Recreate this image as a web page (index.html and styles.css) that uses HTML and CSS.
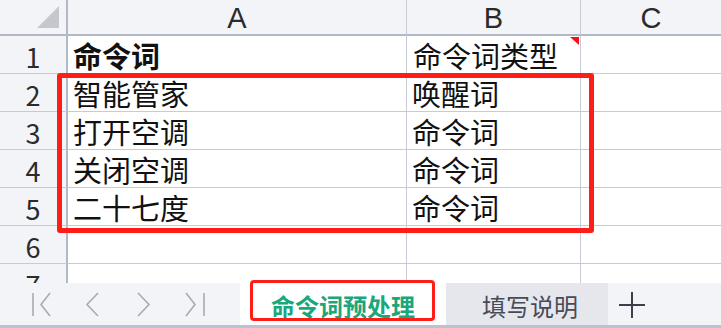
FILE: index.html
```html
<!DOCTYPE html>
<html lang="zh">
<head>
<meta charset="utf-8">
<link rel="stylesheet" href="styles.css">
</head>
<body>
<div class="sheet">
  <div class="grid">
    <div class="corner"><svg width="22" height="22" viewBox="0 0 22 22"><polygon points="22,0 22,22 0,22" fill="#c4c7cd"/></svg></div>
    <div class="colh">A</div>
    <div class="colh">B</div>
    <div class="colh last">C</div>

    <div class="rowh">1</div>
    <div class="cell bold">命令词</div>
    <div class="cell b1">命令词类型<span class="note"></span></div>
    <div class="cell last"></div>

    <div class="rowh">2</div>
    <div class="cell">智能管家</div>
    <div class="cell">唤醒词</div>
    <div class="cell last"></div>

    <div class="rowh">3</div>
    <div class="cell">打开空调</div>
    <div class="cell">命令词</div>
    <div class="cell last"></div>

    <div class="rowh">4</div>
    <div class="cell">关闭空调</div>
    <div class="cell">命令词</div>
    <div class="cell last"></div>

    <div class="rowh">5</div>
    <div class="cell">二十七度</div>
    <div class="cell">命令词</div>
    <div class="cell last"></div>

    <div class="rowh">6</div>
    <div class="cell"></div>
    <div class="cell"></div>
    <div class="cell last"></div>

    <div class="rowh">7</div>
    <div class="cell"></div>
    <div class="cell"></div>
    <div class="cell last"></div>
  </div>

  <div class="mark-grid"></div>

  <div class="tabbar">
    <div class="nav">
      <svg width="240" height="42" viewBox="0 0 240 42">
        <g fill="none" stroke="#a9abb0" stroke-width="1.6">
          <line x1="33" y1="10" x2="33" y2="33"/>
          <polyline points="50,10 41,21.5 50,33"/>
          <polyline points="98,10 87,21.5 98,33"/>
          <polyline points="138,10 149,21.5 138,33"/>
          <polyline points="186,10 195,21.5 186,33"/>
          <line x1="204" y1="10" x2="204" y2="33"/>
        </g>
      </svg>
    </div>
    <div class="tab active">命令词预处理</div>
    <div class="tab other">填写说明</div>
    <div class="addtab">
      <svg width="28" height="28" viewBox="0 0 28 28"><g stroke="#3a3f4d" stroke-width="2"><line x1="1" y1="14" x2="27" y2="14"/><line x1="14" y1="1" x2="14" y2="27"/></g></svg>
    </div>
    <div class="mark-tab"></div>
  </div>
</div>
</body>
</html>
```
FILE: styles.css
```css
* { box-sizing: border-box; }
html, body {
  margin: 0;
  padding: 0;
  background: #ffffff;
}
body {
  width: 721px;
  height: 328px;
  overflow: hidden;
  font-family: "Noto Sans CJK SC", "Noto Sans", sans-serif;
}
.sheet {
  position: relative;
  width: 721px;
  height: 328px;
  overflow: hidden;
}
.grid {
  display: grid;
  grid-template-columns: 68px 339px 174px 140px;
  grid-template-rows: 36px repeat(7, 38px);
  height: 283px;
  overflow: hidden;
}
.corner, .colh {
  background: #f3f4f7;
  border-bottom: 2px solid #b2b8c6;
}
.corner {
  border-right: 2px solid #b2b8c6;
  display: flex;
  align-items: flex-end;
  justify-content: flex-end;
  padding: 0 7px 6px 0;
}
.colh {
  border-right: 1px solid #c6cbd6;
  text-align: center;
  font-family: "Liberation Sans", Arial, sans-serif;
  font-size: 29px;
  color: #2b2b2b;
  line-height: 32px;
  padding-top: 2px;
  height: 36px;
}
.colh.last, .cell.last { border-right: none; }
.rowh {
  background: #f3f4f7;
  border-right: 2px solid #b2b8c6;
  border-bottom: 1px solid #c6cbd6;
  text-align: center;
  font-size: 27px;
  color: #2b2b2b;
  line-height: 37px;
  padding-top: 2px;
}
.cell {
  position: relative;
  border-right: 1px solid #c6cbd6;
  border-bottom: 1px solid #c6cbd6;
  font-size: 29px;
  line-height: 35px;
  color: #111;
  padding: 2px 0 0 5px;
  white-space: nowrap;
}
.cell.b1 { padding-left: 6px; }
.bold { font-weight: bold; }
.note {
  position: absolute;
  top: 1px;
  right: 1px;
  width: 0;
  height: 0;
  border-top: 8px solid #f0141a;
  border-left: 9px solid transparent;
}
.mark-grid {
  position: absolute;
  left: 57px;
  top: 73px;
  width: 537px;
  height: 160px;
  border: 5px solid #ff1d17;
  border-radius: 3px;
}
.tabbar {
  position: relative;
  display: flex;
  height: 45px;
  border-bottom: 3px solid #bcc2ce;
  background: #f3f4f7;
}
.nav {
  width: 240px;
  background: #f3f4f7;
}
.nav svg { display: block; }
.tab {
  display: flex;
  align-items: center;
  justify-content: center;
  font-size: 24px;
  line-height: 1;
  padding-top: 3px;
}
.tab.active {
  width: 206px;
  background: #ffffff;
  color: #1aa77b;
  font-weight: bold;
}
.tab.other {
  width: 162px;
  background: #e5e7ec;
  color: #474b58;
  padding-left: 6px;
}
.addtab {
  width: 48px;
  display: flex;
  align-items: center;
  justify-content: center;
  padding-top: 2px;
}
.addtab svg { display: block; }
.mark-tab {
  position: absolute;
  left: 250px;
  top: -3px;
  width: 185px;
  height: 41px;
  border: 3px solid #ff1d17;
  border-radius: 4px;
}
```
